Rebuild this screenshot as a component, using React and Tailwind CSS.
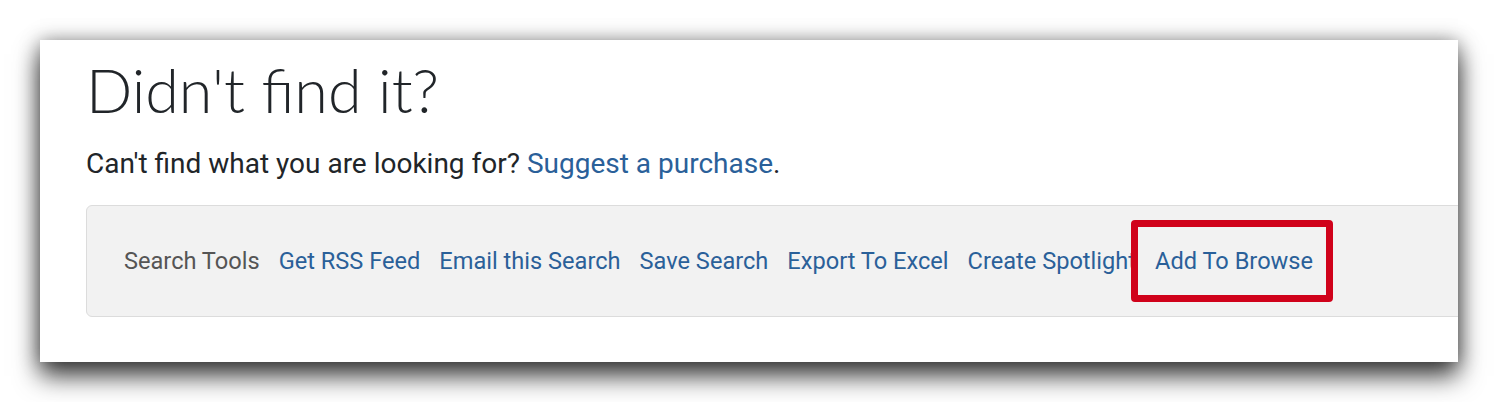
const tools = [
  "Get RSS Feed",
  "Email this Search",
  "Save Search",
  "Export To Excel",
  "Create Spotlight",
];

const App = () => {
  return (
    <div className="w-[1498px] h-[402px] bg-white pt-[40px] pl-[40px]">
      <div className="w-[1418px] h-[322px] bg-white overflow-hidden shadow-[0_14px_24px_rgba(0,0,0,0.75),0_0_18px_rgba(0,0,0,0.35)] pl-[46px] pt-[12px]">
        <h1 className="font-['Lato',sans-serif] font-light text-[61px] leading-[76px] text-[#212529]">
          Didn't find it?
        </h1>
        <p className="mt-[19px] font-['Roboto',sans-serif] text-[28px] leading-[34px] text-[#212529]">
          Can't find what you are looking for?{" "}
          <a href="#" className="text-[#2a6099]">
            Suggest a purchase
          </a>
          .
        </p>
        <div className="mt-[24px] w-[1420px] h-[112px] bg-[#f2f2f2] border border-[#dcdcdc] rounded-l-[6px] flex items-center pl-[37px] gap-[19px] font-['Roboto',sans-serif] text-[23.6px] leading-[28px]">
          <span className="text-[#555555]">Search Tools</span>
          {tools.map((t) => (
            <a key={t} href="#" className="text-[#2a6099]">
              {t}
            </a>
          ))}
          <a href="#" className="relative text-[#2a6099]">
            Add To Browse
            <span className="absolute left-[-24px] right-[-20px] top-[-27px] bottom-[-27px] border-[7px] border-[#d0021b] rounded-[4px]"></span>
          </a>
        </div>
      </div>
    </div>
  );
};

export default App;
